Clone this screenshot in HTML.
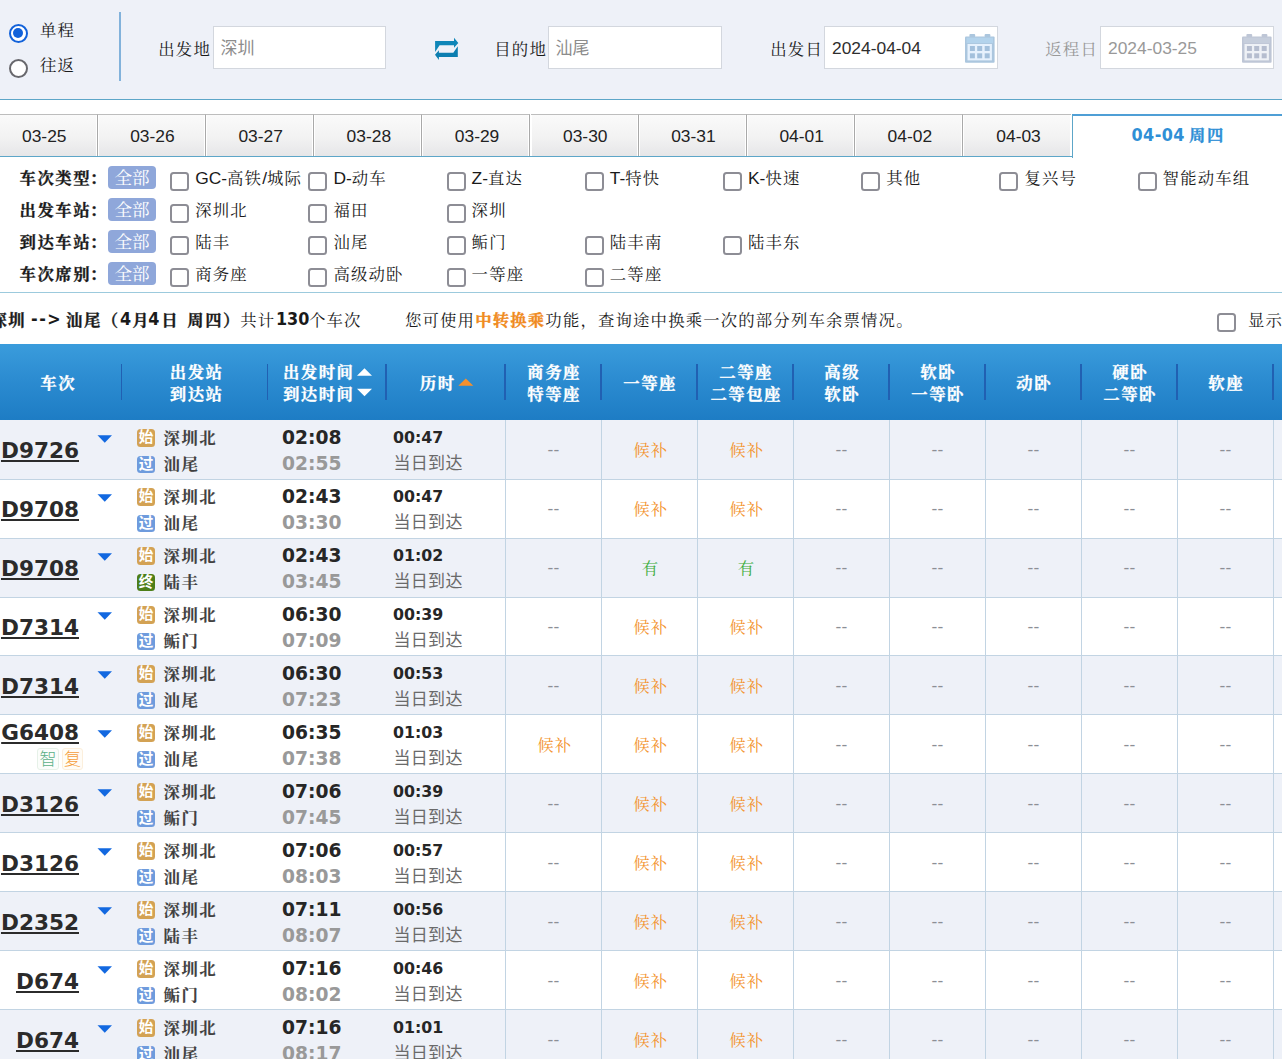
<!DOCTYPE html>
<html lang="zh-CN"><head><meta charset="utf-8"><title>车票预订</title>
<style>
html,body{margin:0;padding:0}
body{width:1282px;height:1059px;overflow:hidden;position:relative;background:#fff;font-size:16.4px;letter-spacing:1.15px;color:#1a1a1a;font-family:"Liberation Sans","Noto Serif CJK SC",serif}
.a{position:absolute;white-space:nowrap;box-sizing:border-box}
.l{font-size:17.4px;letter-spacing:0}
.sf{font-family:"Liberation Sans","Noto Serif CJK SC",serif}
.ss{font-family:"Liberation Sans","Noto Sans CJK SC",sans-serif}
.nm{font-family:"DejaVu Sans",sans-serif;font-weight:bold;letter-spacing:0}
.nc{font-family:"DejaVu Sans Condensed","DejaVu Sans",sans-serif;font-weight:bold;letter-spacing:0;font-size:17.8px;position:relative;top:-0.8px}
.cb{position:absolute;box-sizing:border-box;width:19px;height:19px;border:2px solid #8d8d95;border-radius:3.5px;background:#fff}
.all{position:absolute;box-sizing:border-box;width:48px;height:23px;border-radius:4px;background:#8fa7da;color:#fff;text-align:center;line-height:24.4px;font-size:17.6px;letter-spacing:0}
.inp{position:absolute;box-sizing:border-box;background:#fff;border:1px solid #d3d7de;height:43px;top:26px}
.bd{position:absolute;box-sizing:border-box;width:18.4px;height:17.6px;border-radius:3.5px;color:#fff;font-size:14.6px;line-height:17.5px;text-align:center;letter-spacing:0;font-weight:bold}
</style></head><body>

<div class="a" style="left:0;top:0;width:1282px;height:100px;background:#eef1f8;border-bottom:1px solid #5da6c8"></div>
<div class="a" style="left:8.5px;top:23.7px;width:19px;height:19px;border-radius:50%;border:2.8px solid #1262da;background:#fff"></div>
<div class="a" style="left:12.7px;top:27.9px;width:10.6px;height:10.6px;border-radius:50%;background:#1262da"></div>
<div class="a" style="left:8.5px;top:58.5px;width:19px;height:19px;border-radius:50%;border:2.7px solid #68686d;background:#fff"></div>
<div class="a sf " style="left:40px;top:18.00px;line-height:24px;">单程</div>
<div class="a sf " style="left:40px;top:53.00px;line-height:24px;">往返</div>
<div class="a" style="left:119px;top:12px;width:1.5px;height:69px;background:#82b2db"></div>
<div class="a sf " style="left:158.3px;top:36.60px;line-height:24px;">出发地</div>
<div class="inp" style="left:213px;width:173px"></div>
<div class="a ss " style="left:220.5px;top:37.00px;line-height:24px;font-size:17px;color:#8c8c8c;letter-spacing:0;">深圳</div>
<svg class="a" style="left:430px;top:34px" width="32" height="30" viewBox="430 34 32 30">
<path d="M435.1 41 H454 V37.7 L458.3 42.9 L454 47.8 V45.3 H439.6 L435.1 52 Z" fill="#0f86b8"/>
<path d="M457.8 57.1 H438.9 V59.9 L435 54.7 L438.9 50.3 V52.8 H453.3 L457.8 46.3 Z" fill="#0c7eb0"/>
</svg>
<div class="a sf " style="left:494.3px;top:36.60px;line-height:24px;">目的地</div>
<div class="inp" style="left:548px;width:174px"></div>
<div class="a ss " style="left:555.5px;top:37.00px;line-height:24px;font-size:17px;color:#8c8c8c;letter-spacing:0;">汕尾</div>
<div class="a sf " style="left:770.3px;top:36.60px;line-height:24px;">出发日</div>
<div class="inp" style="left:824px;width:174px"></div>
<div class="a sf " style="left:832px;top:36.40px;line-height:24px;color:#2e2e2e;"><span class="l">2024-04-04</span></div>
<div class="a sf " style="left:1045.3px;top:36.60px;line-height:24px;color:#999;">返程日</div>
<div class="inp" style="left:1100px;width:174px"></div>
<div class="a sf " style="left:1108px;top:36.40px;line-height:24px;color:#999;"><span class="l">2024-03-25</span></div>
<svg class="a" style="left:965.3px;top:34px" width="30" height="29" viewBox="0 0 30 29">
<rect x="4.4" y="0" width="5.8" height="3.2" rx="1" fill="#abc6de"/>
<rect x="19.6" y="0" width="5.8" height="3.2" rx="1" fill="#abc6de"/>
<rect x="0" y="2.6" width="29.6" height="26.2" rx="1" fill="#abc6de"/>
<rect x="1.5" y="3.6" width="26.6" height="5.6" fill="#b3d3ec"/>
<rect x="2.5" y="10" width="24.4" height="16.4" fill="#e6f1fd"/>
<rect x="4.9" y="12" width="5" height="5" fill="#a3c0dc"/><rect x="12.2" y="12" width="5" height="5" fill="#a3c0dc"/><rect x="19.7" y="12" width="5" height="5" fill="#a3c0dc"/>
<rect x="4.9" y="19.3" width="5" height="5" fill="#a3c0dc"/><rect x="12.2" y="19.3" width="5" height="5" fill="#a3c0dc"/><rect x="19.7" y="19.3" width="5" height="5" fill="#a3c0dc"/>
</svg>
<svg class="a" style="left:1242.3px;top:34px" width="30" height="29" viewBox="0 0 30 29">
<rect x="4.4" y="0" width="5.8" height="3.2" rx="1" fill="#bec6d6"/>
<rect x="19.6" y="0" width="5.8" height="3.2" rx="1" fill="#bec6d6"/>
<rect x="0" y="2.6" width="29.6" height="26.2" rx="1" fill="#bec6d6"/>
<rect x="1.5" y="3.6" width="26.6" height="5.6" fill="#c6cedc"/>
<rect x="2.5" y="10" width="24.4" height="16.4" fill="#eef1f6"/>
<rect x="4.9" y="12" width="5" height="5" fill="#b5bdcf"/><rect x="12.2" y="12" width="5" height="5" fill="#b5bdcf"/><rect x="19.7" y="12" width="5" height="5" fill="#b5bdcf"/>
<rect x="4.9" y="19.3" width="5" height="5" fill="#b5bdcf"/><rect x="12.2" y="19.3" width="5" height="5" fill="#b5bdcf"/><rect x="19.7" y="19.3" width="5" height="5" fill="#b5bdcf"/>
</svg>
<div class="a" style="left:0;top:155.5px;width:1282px;height:1.5px;background:#5da6c8"></div>
<div class="a l" style="left:-10.5px;top:114px;width:108.2px;height:42px;background:linear-gradient(#fafafa,#f2f2f2 55%,#e6e6e8);border-top:1px solid #bdbdbd;border-right:1px solid #a9a9a9;box-shadow:inset -1px 0 0 #fff, inset 1px 0 0 #fff;text-align:center;line-height:42px;padding-left:2.3px;color:#222">03-25</div>
<div class="a l" style="left:97.7px;top:114px;width:108.2px;height:42px;background:linear-gradient(#fafafa,#f2f2f2 55%,#e6e6e8);border-top:1px solid #bdbdbd;border-right:1px solid #a9a9a9;box-shadow:inset -1px 0 0 #fff, inset 1px 0 0 #fff;text-align:center;line-height:42px;padding-left:2.3px;color:#222">03-26</div>
<div class="a l" style="left:205.9px;top:114px;width:108.2px;height:42px;background:linear-gradient(#fafafa,#f2f2f2 55%,#e6e6e8);border-top:1px solid #bdbdbd;border-right:1px solid #a9a9a9;box-shadow:inset -1px 0 0 #fff, inset 1px 0 0 #fff;text-align:center;line-height:42px;padding-left:2.3px;color:#222">03-27</div>
<div class="a l" style="left:314.1px;top:114px;width:108.2px;height:42px;background:linear-gradient(#fafafa,#f2f2f2 55%,#e6e6e8);border-top:1px solid #bdbdbd;border-right:1px solid #a9a9a9;box-shadow:inset -1px 0 0 #fff, inset 1px 0 0 #fff;text-align:center;line-height:42px;padding-left:2.3px;color:#222">03-28</div>
<div class="a l" style="left:422.3px;top:114px;width:108.2px;height:42px;background:linear-gradient(#fafafa,#f2f2f2 55%,#e6e6e8);border-top:1px solid #bdbdbd;border-right:1px solid #a9a9a9;box-shadow:inset -1px 0 0 #fff, inset 1px 0 0 #fff;text-align:center;line-height:42px;padding-left:2.3px;color:#222">03-29</div>
<div class="a l" style="left:530.5px;top:114px;width:108.2px;height:42px;background:linear-gradient(#fafafa,#f2f2f2 55%,#e6e6e8);border-top:1px solid #bdbdbd;border-right:1px solid #a9a9a9;box-shadow:inset -1px 0 0 #fff, inset 1px 0 0 #fff;text-align:center;line-height:42px;padding-left:2.3px;color:#222">03-30</div>
<div class="a l" style="left:638.7px;top:114px;width:108.2px;height:42px;background:linear-gradient(#fafafa,#f2f2f2 55%,#e6e6e8);border-top:1px solid #bdbdbd;border-right:1px solid #a9a9a9;box-shadow:inset -1px 0 0 #fff, inset 1px 0 0 #fff;text-align:center;line-height:42px;padding-left:2.3px;color:#222">03-31</div>
<div class="a l" style="left:746.9px;top:114px;width:108.2px;height:42px;background:linear-gradient(#fafafa,#f2f2f2 55%,#e6e6e8);border-top:1px solid #bdbdbd;border-right:1px solid #a9a9a9;box-shadow:inset -1px 0 0 #fff, inset 1px 0 0 #fff;text-align:center;line-height:42px;padding-left:2.3px;color:#222">04-01</div>
<div class="a l" style="left:855.1px;top:114px;width:108.2px;height:42px;background:linear-gradient(#fafafa,#f2f2f2 55%,#e6e6e8);border-top:1px solid #bdbdbd;border-right:1px solid #a9a9a9;box-shadow:inset -1px 0 0 #fff, inset 1px 0 0 #fff;text-align:center;line-height:42px;padding-left:2.3px;color:#222">04-02</div>
<div class="a l" style="left:963.3px;top:114px;width:108.2px;height:42px;background:linear-gradient(#fafafa,#f2f2f2 55%,#e6e6e8);border-top:1px solid #bdbdbd;box-shadow:inset -1px 0 0 #fff, inset 1px 0 0 #fff;text-align:center;line-height:42px;padding-left:2.3px;color:#222">04-03</div>
<div class="a" style="left:1071.5px;top:114px;width:218.5px;height:43.5px;background:#fff;border-top:2px solid #4f9fd6;border-left:1.5px solid #5da6c8;text-align:left;line-height:39.5px;color:#2f8fd6;font-weight:bold"><span class="nc" style="margin-left:59px;letter-spacing:0.45px">04-04</span><span style="margin-left:4.2px;position:relative;top:-0.8px;letter-spacing:1.5px;-webkit-text-stroke:0.3px">周四</span></div>
<div class="a sf " style="left:19.5px;top:165.70px;line-height:24px;font-weight:bold;letter-spacing:1.5px;-webkit-text-stroke:0.3px;">车次类型<span style="margin-left:-1.4px">：</span></div>
<div class="all sf" style="left:108px;top:166.2px">全部</div>
<div class="cb" style="left:170.2px;top:172.0px"></div>
<div class="a sf " style="left:195.2px;top:165.70px;line-height:24px;"><span class="l">GC-</span>高铁<span class="l">/</span>城际</div>
<div class="cb" style="left:308.4px;top:172.0px"></div>
<div class="a sf " style="left:333.4px;top:165.70px;line-height:24px;"><span class="l">D-</span>动车</div>
<div class="cb" style="left:446.6px;top:172.0px"></div>
<div class="a sf " style="left:471.59999999999997px;top:165.70px;line-height:24px;"><span class="l">Z-</span>直达</div>
<div class="cb" style="left:584.8px;top:172.0px"></div>
<div class="a sf " style="left:609.8px;top:165.70px;line-height:24px;"><span class="l">T-</span>特快</div>
<div class="cb" style="left:723.0px;top:172.0px"></div>
<div class="a sf " style="left:748.0px;top:165.70px;line-height:24px;"><span class="l">K-</span>快速</div>
<div class="cb" style="left:861.2px;top:172.0px"></div>
<div class="a sf " style="left:886.2px;top:165.70px;line-height:24px;">其他</div>
<div class="cb" style="left:999.4px;top:172.0px"></div>
<div class="a sf " style="left:1024.3999999999999px;top:165.70px;line-height:24px;">复兴号</div>
<div class="cb" style="left:1137.6px;top:172.0px"></div>
<div class="a sf " style="left:1162.6px;top:165.70px;line-height:24px;">智能动车组</div>
<div class="a sf " style="left:19.5px;top:197.70px;line-height:24px;font-weight:bold;letter-spacing:1.5px;-webkit-text-stroke:0.3px;">出发车站<span style="margin-left:-1.4px">：</span></div>
<div class="all sf" style="left:108px;top:198.2px">全部</div>
<div class="cb" style="left:170.2px;top:204.0px"></div>
<div class="a sf " style="left:195.2px;top:197.70px;line-height:24px;">深圳北</div>
<div class="cb" style="left:308.4px;top:204.0px"></div>
<div class="a sf " style="left:333.4px;top:197.70px;line-height:24px;">福田</div>
<div class="cb" style="left:446.6px;top:204.0px"></div>
<div class="a sf " style="left:471.59999999999997px;top:197.70px;line-height:24px;">深圳</div>
<div class="a sf " style="left:19.5px;top:229.70px;line-height:24px;font-weight:bold;letter-spacing:1.5px;-webkit-text-stroke:0.3px;">到达车站<span style="margin-left:-1.4px">：</span></div>
<div class="all sf" style="left:108px;top:230.2px">全部</div>
<div class="cb" style="left:170.2px;top:236.0px"></div>
<div class="a sf " style="left:195.2px;top:229.70px;line-height:24px;">陆丰</div>
<div class="cb" style="left:308.4px;top:236.0px"></div>
<div class="a sf " style="left:333.4px;top:229.70px;line-height:24px;">汕尾</div>
<div class="cb" style="left:446.6px;top:236.0px"></div>
<div class="a sf " style="left:471.59999999999997px;top:229.70px;line-height:24px;">鲘门</div>
<div class="cb" style="left:584.8px;top:236.0px"></div>
<div class="a sf " style="left:609.8px;top:229.70px;line-height:24px;">陆丰南</div>
<div class="cb" style="left:723.0px;top:236.0px"></div>
<div class="a sf " style="left:748.0px;top:229.70px;line-height:24px;">陆丰东</div>
<div class="a sf " style="left:19.5px;top:261.70px;line-height:24px;font-weight:bold;letter-spacing:1.5px;-webkit-text-stroke:0.3px;">车次席别<span style="margin-left:-1.4px">：</span></div>
<div class="all sf" style="left:108px;top:262.2px">全部</div>
<div class="cb" style="left:170.2px;top:268.0px"></div>
<div class="a sf " style="left:195.2px;top:261.70px;line-height:24px;">商务座</div>
<div class="cb" style="left:308.4px;top:268.0px"></div>
<div class="a sf " style="left:333.4px;top:261.70px;line-height:24px;">高级动卧</div>
<div class="cb" style="left:446.6px;top:268.0px"></div>
<div class="a sf " style="left:471.59999999999997px;top:261.70px;line-height:24px;">一等座</div>
<div class="cb" style="left:584.8px;top:268.0px"></div>
<div class="a sf " style="left:609.8px;top:261.70px;line-height:24px;">二等座</div>
<div class="a" style="left:0;top:292px;width:1282px;height:1px;background:#9ccadd"></div>
<div class="a sf " style="left:-173.8px;top:308.00px;line-height:24px;font-weight:bold;letter-spacing:1.5px;-webkit-text-stroke:0.3px;width:200px;text-align:right;">深圳</div>
<div class="a sf " style="left:31px;top:308.00px;line-height:24px;"><span class="nc" style="letter-spacing:1.5px">--&gt;</span></div>
<div class="a sf " style="left:66px;top:308.00px;line-height:24px;font-weight:bold;letter-spacing:1.5px;-webkit-text-stroke:0.3px;">汕尾（</div>
<div class="a sf " style="left:105.5px;top:308.00px;line-height:24px;width:40px;text-align:center;"><span class="nc">4</span></div>
<div class="a sf " style="left:132.3px;top:308.00px;line-height:24px;font-weight:bold;letter-spacing:1.5px;-webkit-text-stroke:0.3px;">月</div>
<div class="a sf " style="left:133.9px;top:308.00px;line-height:24px;width:40px;text-align:center;"><span class="nc">4</span></div>
<div class="a sf " style="left:161.3px;top:308.00px;line-height:24px;font-weight:bold;letter-spacing:1.5px;-webkit-text-stroke:0.3px;">日</div>
<div class="a sf " style="left:187.3px;top:308.00px;line-height:24px;font-weight:bold;letter-spacing:1.5px;-webkit-text-stroke:0.3px;">周四）</div>
<div class="a sf " style="left:240.3px;top:308.00px;line-height:24px;">共计</div>
<div class="a sf " style="left:262.6px;top:308.00px;line-height:24px;width:60px;text-align:center;"><span class="nc">130</span></div>
<div class="a sf " style="left:309px;top:308.00px;line-height:24px;">个车次</div>
<div class="a sf " style="left:405px;top:308.00px;line-height:24px;">您可使用<b style="color:#f08a20;letter-spacing:1.15px;-webkit-text-stroke:0.3px">中转换乘</b>功能，查询途中换乘一次的部分列车余票情况。</div>
<div class="cb" style="left:1217px;top:313px"></div>
<div class="a sf " style="left:1248px;top:308.00px;line-height:24px;">显示全部可预订车次</div>
<div class="a" style="left:0;top:344px;width:1282px;height:76.5px;background:linear-gradient(#3a9cdc,#2c8cd1 45%,#1d7cc4)"></div>
<div class="a" style="left:120.95px;top:363.5px;width:1.5px;height:36.5px;background:#2160b2"></div>
<div class="a" style="left:266.75px;top:363.5px;width:1.5px;height:36.5px;background:#2160b2"></div>
<div class="a" style="left:385.25px;top:363.5px;width:1.5px;height:36.5px;background:#2160b2"></div>
<div class="a" style="left:504.25px;top:363.5px;width:1.5px;height:36.5px;background:#2160b2"></div>
<div class="a" style="left:600.25px;top:363.5px;width:1.5px;height:36.5px;background:#2160b2"></div>
<div class="a" style="left:696.25px;top:363.5px;width:1.5px;height:36.5px;background:#2160b2"></div>
<div class="a" style="left:792.25px;top:363.5px;width:1.5px;height:36.5px;background:#2160b2"></div>
<div class="a" style="left:888.25px;top:363.5px;width:1.5px;height:36.5px;background:#2160b2"></div>
<div class="a" style="left:984.25px;top:363.5px;width:1.5px;height:36.5px;background:#2160b2"></div>
<div class="a" style="left:1080.25px;top:363.5px;width:1.5px;height:36.5px;background:#2160b2"></div>
<div class="a" style="left:1176.25px;top:363.5px;width:1.5px;height:36.5px;background:#2160b2"></div>
<div class="a" style="left:1272.25px;top:363.5px;width:1.5px;height:36.5px;background:#2160b2"></div>
<div class="a sf " style="left:-41.8px;top:371.00px;line-height:24px;color:#fff;font-weight:bold;letter-spacing:1.5px;-webkit-text-stroke:0.3px;width:200px;text-align:center;">车次</div>
<div class="a sf " style="left:96.69999999999999px;top:360.30px;line-height:24px;color:#fff;font-weight:bold;letter-spacing:1.5px;-webkit-text-stroke:0.3px;width:200px;text-align:center;">出发站</div>
<div class="a sf " style="left:96.69999999999999px;top:381.80px;line-height:24px;color:#fff;font-weight:bold;letter-spacing:1.5px;-webkit-text-stroke:0.3px;width:200px;text-align:center;">到达站</div>
<div class="a sf " style="left:218.7px;top:360.30px;line-height:24px;color:#fff;font-weight:bold;letter-spacing:1.5px;-webkit-text-stroke:0.3px;width:200px;text-align:center;">出发时间</div>
<div class="a sf " style="left:218.7px;top:381.80px;line-height:24px;color:#fff;font-weight:bold;letter-spacing:1.5px;-webkit-text-stroke:0.3px;width:200px;text-align:center;">到达时间</div>
<div class="a sf " style="left:337.7px;top:371.00px;line-height:24px;color:#fff;font-weight:bold;letter-spacing:1.5px;-webkit-text-stroke:0.3px;width:200px;text-align:center;">历时</div>
<div class="a sf " style="left:454.20000000000005px;top:360.30px;line-height:24px;color:#fff;font-weight:bold;letter-spacing:1.5px;-webkit-text-stroke:0.3px;width:200px;text-align:center;">商务座</div>
<div class="a sf " style="left:454.20000000000005px;top:381.80px;line-height:24px;color:#fff;font-weight:bold;letter-spacing:1.5px;-webkit-text-stroke:0.3px;width:200px;text-align:center;">特等座</div>
<div class="a sf " style="left:550.2px;top:371.00px;line-height:24px;color:#fff;font-weight:bold;letter-spacing:1.5px;-webkit-text-stroke:0.3px;width:200px;text-align:center;">一等座</div>
<div class="a sf " style="left:646.2px;top:360.30px;line-height:24px;color:#fff;font-weight:bold;letter-spacing:1.5px;-webkit-text-stroke:0.3px;width:200px;text-align:center;">二等座</div>
<div class="a sf " style="left:646.2px;top:381.80px;line-height:24px;color:#fff;font-weight:bold;letter-spacing:1.5px;-webkit-text-stroke:0.3px;width:200px;text-align:center;">二等包座</div>
<div class="a sf " style="left:742.2px;top:360.30px;line-height:24px;color:#fff;font-weight:bold;letter-spacing:1.5px;-webkit-text-stroke:0.3px;width:200px;text-align:center;">高级</div>
<div class="a sf " style="left:742.2px;top:381.80px;line-height:24px;color:#fff;font-weight:bold;letter-spacing:1.5px;-webkit-text-stroke:0.3px;width:200px;text-align:center;">软卧</div>
<div class="a sf " style="left:838.2px;top:360.30px;line-height:24px;color:#fff;font-weight:bold;letter-spacing:1.5px;-webkit-text-stroke:0.3px;width:200px;text-align:center;">软卧</div>
<div class="a sf " style="left:838.2px;top:381.80px;line-height:24px;color:#fff;font-weight:bold;letter-spacing:1.5px;-webkit-text-stroke:0.3px;width:200px;text-align:center;">一等卧</div>
<div class="a sf " style="left:934.2px;top:371.00px;line-height:24px;color:#fff;font-weight:bold;letter-spacing:1.5px;-webkit-text-stroke:0.3px;width:200px;text-align:center;">动卧</div>
<div class="a sf " style="left:1030.2px;top:360.30px;line-height:24px;color:#fff;font-weight:bold;letter-spacing:1.5px;-webkit-text-stroke:0.3px;width:200px;text-align:center;">硬卧</div>
<div class="a sf " style="left:1030.2px;top:381.80px;line-height:24px;color:#fff;font-weight:bold;letter-spacing:1.5px;-webkit-text-stroke:0.3px;width:200px;text-align:center;">二等卧</div>
<div class="a sf " style="left:1126.2px;top:371.00px;line-height:24px;color:#fff;font-weight:bold;letter-spacing:1.5px;-webkit-text-stroke:0.3px;width:200px;text-align:center;">软座</div>
<svg class="a" style="left:356.2px;top:366px" width="18" height="34" viewBox="0 0 18 34"><path d="M1 9.7 L8.5 2.2 L16 9.7 Z" fill="#fff"/><path d="M1 22.8 L16 22.8 L8.5 30.3 Z" fill="#fff"/></svg>
<svg class="a" style="left:458px;top:377px" width="16" height="10" viewBox="0 0 16 10"><path d="M0.3 8.7 L7.8 1.4 L15.3 8.7 Z" fill="#f4902e"/></svg>
<div class="a" style="left:0;top:420px;width:1282px;height:60px;background:#eef1f8;border-bottom:1px solid #c2d4e3"></div>
<div class="a" style="left:505px;top:420px;width:1px;height:60px;background:#c2d4e3"></div>
<div class="a" style="left:601px;top:420px;width:1px;height:60px;background:#c2d4e3"></div>
<div class="a" style="left:697px;top:420px;width:1px;height:60px;background:#c2d4e3"></div>
<div class="a" style="left:793px;top:420px;width:1px;height:60px;background:#c2d4e3"></div>
<div class="a" style="left:889px;top:420px;width:1px;height:60px;background:#c2d4e3"></div>
<div class="a" style="left:985px;top:420px;width:1px;height:60px;background:#c2d4e3"></div>
<div class="a" style="left:1081px;top:420px;width:1px;height:60px;background:#c2d4e3"></div>
<div class="a" style="left:1177px;top:420px;width:1px;height:60px;background:#c2d4e3"></div>
<div class="a" style="left:1273px;top:420px;width:1px;height:60px;background:#c2d4e3"></div>
<div class="a nm" style="left:-121px;width:200px;text-align:right;top:436.3px;line-height:30px;font-size:21.6px;color:#2b2b2b;text-decoration:underline;text-decoration-thickness:2px;text-underline-offset:2px">D9726</div>
<svg class="a" style="left:97px;top:435.0px" width="16" height="9" viewBox="0 0 16 9"><path d="M0.5 0.3 H15 L7.75 7.8 Z" fill="#1268e0"/></svg>
<div class="bd ss" style="left:136.9px;top:429.3px;background:#d3a254">始</div>
<div class="bd ss" style="left:136.9px;top:455.8px;background:#6e9bdd">过</div>
<div class="a sf " style="left:163.6px;top:425.50px;line-height:24px;color:#404040;font-weight:bold;letter-spacing:1.5px;-webkit-text-stroke:0.3px;-webkit-text-stroke:0.12px;">深圳北</div>
<div class="a sf " style="left:163.6px;top:451.50px;line-height:24px;color:#404040;font-weight:bold;letter-spacing:1.5px;-webkit-text-stroke:0.3px;-webkit-text-stroke:0.12px;">汕尾</div>
<div class="a nm " style="left:282px;top:425.50px;line-height:24px;font-size:18.7px;color:#262626;">02:08</div>
<div class="a nm " style="left:282px;top:451.80px;line-height:24px;font-size:18.7px;color:#999;">02:55</div>
<div class="a nm " style="left:393px;top:425.80px;line-height:24px;font-size:15.84px;color:#262626;">00:47</div>
<div class="a ss " style="left:393.5px;top:452.00px;line-height:24px;font-size:17px;color:#6a6a6a;letter-spacing:0.3px;">当日到达</div>
<div class="a sf " style="left:508.5px;top:437.00px;line-height:24px;font-size:17.4px;color:#8c8f96;letter-spacing:0.3px;width:90px;text-align:center;">--</div>
<div class="a sf " style="left:605.7px;top:437.60px;line-height:24px;color:#f3942f;width:90px;text-align:center;">候补</div>
<div class="a sf " style="left:701.7px;top:437.60px;line-height:24px;color:#f3942f;width:90px;text-align:center;">候补</div>
<div class="a sf " style="left:796.5px;top:437.00px;line-height:24px;font-size:17.4px;color:#8c8f96;letter-spacing:0.3px;width:90px;text-align:center;">--</div>
<div class="a sf " style="left:892.5px;top:437.00px;line-height:24px;font-size:17.4px;color:#8c8f96;letter-spacing:0.3px;width:90px;text-align:center;">--</div>
<div class="a sf " style="left:988.5px;top:437.00px;line-height:24px;font-size:17.4px;color:#8c8f96;letter-spacing:0.3px;width:90px;text-align:center;">--</div>
<div class="a sf " style="left:1084.5px;top:437.00px;line-height:24px;font-size:17.4px;color:#8c8f96;letter-spacing:0.3px;width:90px;text-align:center;">--</div>
<div class="a sf " style="left:1180.5px;top:437.00px;line-height:24px;font-size:17.4px;color:#8c8f96;letter-spacing:0.3px;width:90px;text-align:center;">--</div>
<div class="a" style="left:0;top:480px;width:1282px;height:59px;background:#fff;border-bottom:1px solid #c2d4e3"></div>
<div class="a" style="left:505px;top:480px;width:1px;height:59px;background:#c2d4e3"></div>
<div class="a" style="left:601px;top:480px;width:1px;height:59px;background:#c2d4e3"></div>
<div class="a" style="left:697px;top:480px;width:1px;height:59px;background:#c2d4e3"></div>
<div class="a" style="left:793px;top:480px;width:1px;height:59px;background:#c2d4e3"></div>
<div class="a" style="left:889px;top:480px;width:1px;height:59px;background:#c2d4e3"></div>
<div class="a" style="left:985px;top:480px;width:1px;height:59px;background:#c2d4e3"></div>
<div class="a" style="left:1081px;top:480px;width:1px;height:59px;background:#c2d4e3"></div>
<div class="a" style="left:1177px;top:480px;width:1px;height:59px;background:#c2d4e3"></div>
<div class="a" style="left:1273px;top:480px;width:1px;height:59px;background:#c2d4e3"></div>
<div class="a nm" style="left:-121px;width:200px;text-align:right;top:495.3px;line-height:30px;font-size:21.6px;color:#2b2b2b;text-decoration:underline;text-decoration-thickness:2px;text-underline-offset:2px">D9708</div>
<svg class="a" style="left:97px;top:494.0px" width="16" height="9" viewBox="0 0 16 9"><path d="M0.5 0.3 H15 L7.75 7.8 Z" fill="#1268e0"/></svg>
<div class="bd ss" style="left:136.9px;top:488.3px;background:#d3a254">始</div>
<div class="bd ss" style="left:136.9px;top:514.8px;background:#6e9bdd">过</div>
<div class="a sf " style="left:163.6px;top:484.50px;line-height:24px;color:#404040;font-weight:bold;letter-spacing:1.5px;-webkit-text-stroke:0.3px;-webkit-text-stroke:0.12px;">深圳北</div>
<div class="a sf " style="left:163.6px;top:510.50px;line-height:24px;color:#404040;font-weight:bold;letter-spacing:1.5px;-webkit-text-stroke:0.3px;-webkit-text-stroke:0.12px;">汕尾</div>
<div class="a nm " style="left:282px;top:484.50px;line-height:24px;font-size:18.7px;color:#262626;">02:43</div>
<div class="a nm " style="left:282px;top:510.80px;line-height:24px;font-size:18.7px;color:#999;">03:30</div>
<div class="a nm " style="left:393px;top:484.80px;line-height:24px;font-size:15.84px;color:#262626;">00:47</div>
<div class="a ss " style="left:393.5px;top:511.00px;line-height:24px;font-size:17px;color:#6a6a6a;letter-spacing:0.3px;">当日到达</div>
<div class="a sf " style="left:508.5px;top:496.00px;line-height:24px;font-size:17.4px;color:#8c8f96;letter-spacing:0.3px;width:90px;text-align:center;">--</div>
<div class="a sf " style="left:605.7px;top:496.60px;line-height:24px;color:#f3942f;width:90px;text-align:center;">候补</div>
<div class="a sf " style="left:701.7px;top:496.60px;line-height:24px;color:#f3942f;width:90px;text-align:center;">候补</div>
<div class="a sf " style="left:796.5px;top:496.00px;line-height:24px;font-size:17.4px;color:#8c8f96;letter-spacing:0.3px;width:90px;text-align:center;">--</div>
<div class="a sf " style="left:892.5px;top:496.00px;line-height:24px;font-size:17.4px;color:#8c8f96;letter-spacing:0.3px;width:90px;text-align:center;">--</div>
<div class="a sf " style="left:988.5px;top:496.00px;line-height:24px;font-size:17.4px;color:#8c8f96;letter-spacing:0.3px;width:90px;text-align:center;">--</div>
<div class="a sf " style="left:1084.5px;top:496.00px;line-height:24px;font-size:17.4px;color:#8c8f96;letter-spacing:0.3px;width:90px;text-align:center;">--</div>
<div class="a sf " style="left:1180.5px;top:496.00px;line-height:24px;font-size:17.4px;color:#8c8f96;letter-spacing:0.3px;width:90px;text-align:center;">--</div>
<div class="a" style="left:0;top:539px;width:1282px;height:59px;background:#eef1f8;border-bottom:1px solid #c2d4e3"></div>
<div class="a" style="left:505px;top:539px;width:1px;height:59px;background:#c2d4e3"></div>
<div class="a" style="left:601px;top:539px;width:1px;height:59px;background:#c2d4e3"></div>
<div class="a" style="left:697px;top:539px;width:1px;height:59px;background:#c2d4e3"></div>
<div class="a" style="left:793px;top:539px;width:1px;height:59px;background:#c2d4e3"></div>
<div class="a" style="left:889px;top:539px;width:1px;height:59px;background:#c2d4e3"></div>
<div class="a" style="left:985px;top:539px;width:1px;height:59px;background:#c2d4e3"></div>
<div class="a" style="left:1081px;top:539px;width:1px;height:59px;background:#c2d4e3"></div>
<div class="a" style="left:1177px;top:539px;width:1px;height:59px;background:#c2d4e3"></div>
<div class="a" style="left:1273px;top:539px;width:1px;height:59px;background:#c2d4e3"></div>
<div class="a nm" style="left:-121px;width:200px;text-align:right;top:554.3px;line-height:30px;font-size:21.6px;color:#2b2b2b;text-decoration:underline;text-decoration-thickness:2px;text-underline-offset:2px">D9708</div>
<svg class="a" style="left:97px;top:553.0px" width="16" height="9" viewBox="0 0 16 9"><path d="M0.5 0.3 H15 L7.75 7.8 Z" fill="#1268e0"/></svg>
<div class="bd ss" style="left:136.9px;top:547.3px;background:#d3a254">始</div>
<div class="bd ss" style="left:136.9px;top:573.8px;background:#4d7e18">终</div>
<div class="a sf " style="left:163.6px;top:543.50px;line-height:24px;color:#404040;font-weight:bold;letter-spacing:1.5px;-webkit-text-stroke:0.3px;-webkit-text-stroke:0.12px;">深圳北</div>
<div class="a sf " style="left:163.6px;top:569.50px;line-height:24px;color:#404040;font-weight:bold;letter-spacing:1.5px;-webkit-text-stroke:0.3px;-webkit-text-stroke:0.12px;">陆丰</div>
<div class="a nm " style="left:282px;top:543.50px;line-height:24px;font-size:18.7px;color:#262626;">02:43</div>
<div class="a nm " style="left:282px;top:569.80px;line-height:24px;font-size:18.7px;color:#999;">03:45</div>
<div class="a nm " style="left:393px;top:543.80px;line-height:24px;font-size:15.84px;color:#262626;">01:02</div>
<div class="a ss " style="left:393.5px;top:570.00px;line-height:24px;font-size:17px;color:#6a6a6a;letter-spacing:0.3px;">当日到达</div>
<div class="a sf " style="left:508.5px;top:555.00px;line-height:24px;font-size:17.4px;color:#8c8f96;letter-spacing:0.3px;width:90px;text-align:center;">--</div>
<div class="a sf " style="left:605.5px;top:555.60px;line-height:24px;color:#3fae3f;width:90px;text-align:center;">有</div>
<div class="a sf " style="left:701.5px;top:555.60px;line-height:24px;color:#3fae3f;width:90px;text-align:center;">有</div>
<div class="a sf " style="left:796.5px;top:555.00px;line-height:24px;font-size:17.4px;color:#8c8f96;letter-spacing:0.3px;width:90px;text-align:center;">--</div>
<div class="a sf " style="left:892.5px;top:555.00px;line-height:24px;font-size:17.4px;color:#8c8f96;letter-spacing:0.3px;width:90px;text-align:center;">--</div>
<div class="a sf " style="left:988.5px;top:555.00px;line-height:24px;font-size:17.4px;color:#8c8f96;letter-spacing:0.3px;width:90px;text-align:center;">--</div>
<div class="a sf " style="left:1084.5px;top:555.00px;line-height:24px;font-size:17.4px;color:#8c8f96;letter-spacing:0.3px;width:90px;text-align:center;">--</div>
<div class="a sf " style="left:1180.5px;top:555.00px;line-height:24px;font-size:17.4px;color:#8c8f96;letter-spacing:0.3px;width:90px;text-align:center;">--</div>
<div class="a" style="left:0;top:598px;width:1282px;height:58px;background:#fff;border-bottom:1px solid #c2d4e3"></div>
<div class="a" style="left:505px;top:598px;width:1px;height:58px;background:#c2d4e3"></div>
<div class="a" style="left:601px;top:598px;width:1px;height:58px;background:#c2d4e3"></div>
<div class="a" style="left:697px;top:598px;width:1px;height:58px;background:#c2d4e3"></div>
<div class="a" style="left:793px;top:598px;width:1px;height:58px;background:#c2d4e3"></div>
<div class="a" style="left:889px;top:598px;width:1px;height:58px;background:#c2d4e3"></div>
<div class="a" style="left:985px;top:598px;width:1px;height:58px;background:#c2d4e3"></div>
<div class="a" style="left:1081px;top:598px;width:1px;height:58px;background:#c2d4e3"></div>
<div class="a" style="left:1177px;top:598px;width:1px;height:58px;background:#c2d4e3"></div>
<div class="a" style="left:1273px;top:598px;width:1px;height:58px;background:#c2d4e3"></div>
<div class="a nm" style="left:-121px;width:200px;text-align:right;top:613.3px;line-height:30px;font-size:21.6px;color:#2b2b2b;text-decoration:underline;text-decoration-thickness:2px;text-underline-offset:2px">D7314</div>
<svg class="a" style="left:97px;top:612.0px" width="16" height="9" viewBox="0 0 16 9"><path d="M0.5 0.3 H15 L7.75 7.8 Z" fill="#1268e0"/></svg>
<div class="bd ss" style="left:136.9px;top:606.3px;background:#d3a254">始</div>
<div class="bd ss" style="left:136.9px;top:632.8px;background:#6e9bdd">过</div>
<div class="a sf " style="left:163.6px;top:602.50px;line-height:24px;color:#404040;font-weight:bold;letter-spacing:1.5px;-webkit-text-stroke:0.3px;-webkit-text-stroke:0.12px;">深圳北</div>
<div class="a sf " style="left:163.6px;top:628.50px;line-height:24px;color:#404040;font-weight:bold;letter-spacing:1.5px;-webkit-text-stroke:0.3px;-webkit-text-stroke:0.12px;">鲘门</div>
<div class="a nm " style="left:282px;top:602.50px;line-height:24px;font-size:18.7px;color:#262626;">06:30</div>
<div class="a nm " style="left:282px;top:628.80px;line-height:24px;font-size:18.7px;color:#999;">07:09</div>
<div class="a nm " style="left:393px;top:602.80px;line-height:24px;font-size:15.84px;color:#262626;">00:39</div>
<div class="a ss " style="left:393.5px;top:629.00px;line-height:24px;font-size:17px;color:#6a6a6a;letter-spacing:0.3px;">当日到达</div>
<div class="a sf " style="left:508.5px;top:614.00px;line-height:24px;font-size:17.4px;color:#8c8f96;letter-spacing:0.3px;width:90px;text-align:center;">--</div>
<div class="a sf " style="left:605.7px;top:614.60px;line-height:24px;color:#f3942f;width:90px;text-align:center;">候补</div>
<div class="a sf " style="left:701.7px;top:614.60px;line-height:24px;color:#f3942f;width:90px;text-align:center;">候补</div>
<div class="a sf " style="left:796.5px;top:614.00px;line-height:24px;font-size:17.4px;color:#8c8f96;letter-spacing:0.3px;width:90px;text-align:center;">--</div>
<div class="a sf " style="left:892.5px;top:614.00px;line-height:24px;font-size:17.4px;color:#8c8f96;letter-spacing:0.3px;width:90px;text-align:center;">--</div>
<div class="a sf " style="left:988.5px;top:614.00px;line-height:24px;font-size:17.4px;color:#8c8f96;letter-spacing:0.3px;width:90px;text-align:center;">--</div>
<div class="a sf " style="left:1084.5px;top:614.00px;line-height:24px;font-size:17.4px;color:#8c8f96;letter-spacing:0.3px;width:90px;text-align:center;">--</div>
<div class="a sf " style="left:1180.5px;top:614.00px;line-height:24px;font-size:17.4px;color:#8c8f96;letter-spacing:0.3px;width:90px;text-align:center;">--</div>
<div class="a" style="left:0;top:656px;width:1282px;height:59px;background:#eef1f8;border-bottom:1px solid #c2d4e3"></div>
<div class="a" style="left:505px;top:656px;width:1px;height:59px;background:#c2d4e3"></div>
<div class="a" style="left:601px;top:656px;width:1px;height:59px;background:#c2d4e3"></div>
<div class="a" style="left:697px;top:656px;width:1px;height:59px;background:#c2d4e3"></div>
<div class="a" style="left:793px;top:656px;width:1px;height:59px;background:#c2d4e3"></div>
<div class="a" style="left:889px;top:656px;width:1px;height:59px;background:#c2d4e3"></div>
<div class="a" style="left:985px;top:656px;width:1px;height:59px;background:#c2d4e3"></div>
<div class="a" style="left:1081px;top:656px;width:1px;height:59px;background:#c2d4e3"></div>
<div class="a" style="left:1177px;top:656px;width:1px;height:59px;background:#c2d4e3"></div>
<div class="a" style="left:1273px;top:656px;width:1px;height:59px;background:#c2d4e3"></div>
<div class="a nm" style="left:-121px;width:200px;text-align:right;top:672.3px;line-height:30px;font-size:21.6px;color:#2b2b2b;text-decoration:underline;text-decoration-thickness:2px;text-underline-offset:2px">D7314</div>
<svg class="a" style="left:97px;top:671.0px" width="16" height="9" viewBox="0 0 16 9"><path d="M0.5 0.3 H15 L7.75 7.8 Z" fill="#1268e0"/></svg>
<div class="bd ss" style="left:136.9px;top:665.3px;background:#d3a254">始</div>
<div class="bd ss" style="left:136.9px;top:691.8px;background:#6e9bdd">过</div>
<div class="a sf " style="left:163.6px;top:661.50px;line-height:24px;color:#404040;font-weight:bold;letter-spacing:1.5px;-webkit-text-stroke:0.3px;-webkit-text-stroke:0.12px;">深圳北</div>
<div class="a sf " style="left:163.6px;top:687.50px;line-height:24px;color:#404040;font-weight:bold;letter-spacing:1.5px;-webkit-text-stroke:0.3px;-webkit-text-stroke:0.12px;">汕尾</div>
<div class="a nm " style="left:282px;top:661.50px;line-height:24px;font-size:18.7px;color:#262626;">06:30</div>
<div class="a nm " style="left:282px;top:687.80px;line-height:24px;font-size:18.7px;color:#999;">07:23</div>
<div class="a nm " style="left:393px;top:661.80px;line-height:24px;font-size:15.84px;color:#262626;">00:53</div>
<div class="a ss " style="left:393.5px;top:688.00px;line-height:24px;font-size:17px;color:#6a6a6a;letter-spacing:0.3px;">当日到达</div>
<div class="a sf " style="left:508.5px;top:673.00px;line-height:24px;font-size:17.4px;color:#8c8f96;letter-spacing:0.3px;width:90px;text-align:center;">--</div>
<div class="a sf " style="left:605.7px;top:673.60px;line-height:24px;color:#f3942f;width:90px;text-align:center;">候补</div>
<div class="a sf " style="left:701.7px;top:673.60px;line-height:24px;color:#f3942f;width:90px;text-align:center;">候补</div>
<div class="a sf " style="left:796.5px;top:673.00px;line-height:24px;font-size:17.4px;color:#8c8f96;letter-spacing:0.3px;width:90px;text-align:center;">--</div>
<div class="a sf " style="left:892.5px;top:673.00px;line-height:24px;font-size:17.4px;color:#8c8f96;letter-spacing:0.3px;width:90px;text-align:center;">--</div>
<div class="a sf " style="left:988.5px;top:673.00px;line-height:24px;font-size:17.4px;color:#8c8f96;letter-spacing:0.3px;width:90px;text-align:center;">--</div>
<div class="a sf " style="left:1084.5px;top:673.00px;line-height:24px;font-size:17.4px;color:#8c8f96;letter-spacing:0.3px;width:90px;text-align:center;">--</div>
<div class="a sf " style="left:1180.5px;top:673.00px;line-height:24px;font-size:17.4px;color:#8c8f96;letter-spacing:0.3px;width:90px;text-align:center;">--</div>
<div class="a" style="left:0;top:715px;width:1282px;height:59px;background:#fff;border-bottom:1px solid #c2d4e3"></div>
<div class="a" style="left:505px;top:715px;width:1px;height:59px;background:#c2d4e3"></div>
<div class="a" style="left:601px;top:715px;width:1px;height:59px;background:#c2d4e3"></div>
<div class="a" style="left:697px;top:715px;width:1px;height:59px;background:#c2d4e3"></div>
<div class="a" style="left:793px;top:715px;width:1px;height:59px;background:#c2d4e3"></div>
<div class="a" style="left:889px;top:715px;width:1px;height:59px;background:#c2d4e3"></div>
<div class="a" style="left:985px;top:715px;width:1px;height:59px;background:#c2d4e3"></div>
<div class="a" style="left:1081px;top:715px;width:1px;height:59px;background:#c2d4e3"></div>
<div class="a" style="left:1177px;top:715px;width:1px;height:59px;background:#c2d4e3"></div>
<div class="a" style="left:1273px;top:715px;width:1px;height:59px;background:#c2d4e3"></div>
<div class="a nm" style="left:-121px;width:200px;text-align:right;top:717.9px;line-height:30px;font-size:21.6px;color:#2b2b2b;text-decoration:underline;text-decoration-thickness:2px;text-underline-offset:2px">G6408</div>
<div class="a ss" style="left:37.3px;top:747.7px;width:21.3px;height:22.4px;border:1px solid #e6f1e8;border-radius:3px;background:#fbfdfb;color:#5bb088;letter-spacing:0;font-size:17px;font-weight:300;line-height:22.6px;text-align:center">智</div>
<div class="a ss" style="left:61.8px;top:747.7px;width:21.3px;height:22.4px;border:1px solid #fcefdc;border-radius:3px;background:#fffcf6;color:#f59e3a;letter-spacing:0;font-size:17px;font-weight:300;line-height:22.6px;text-align:center">复</div>
<svg class="a" style="left:97px;top:730.0px" width="16" height="9" viewBox="0 0 16 9"><path d="M0.5 0.3 H15 L7.75 7.8 Z" fill="#1268e0"/></svg>
<div class="bd ss" style="left:136.9px;top:724.3px;background:#d3a254">始</div>
<div class="bd ss" style="left:136.9px;top:750.8px;background:#6e9bdd">过</div>
<div class="a sf " style="left:163.6px;top:720.50px;line-height:24px;color:#404040;font-weight:bold;letter-spacing:1.5px;-webkit-text-stroke:0.3px;-webkit-text-stroke:0.12px;">深圳北</div>
<div class="a sf " style="left:163.6px;top:746.50px;line-height:24px;color:#404040;font-weight:bold;letter-spacing:1.5px;-webkit-text-stroke:0.3px;-webkit-text-stroke:0.12px;">汕尾</div>
<div class="a nm " style="left:282px;top:720.50px;line-height:24px;font-size:18.7px;color:#262626;">06:35</div>
<div class="a nm " style="left:282px;top:746.80px;line-height:24px;font-size:18.7px;color:#999;">07:38</div>
<div class="a nm " style="left:393px;top:720.80px;line-height:24px;font-size:15.84px;color:#262626;">01:03</div>
<div class="a ss " style="left:393.5px;top:747.00px;line-height:24px;font-size:17px;color:#6a6a6a;letter-spacing:0.3px;">当日到达</div>
<div class="a sf " style="left:509.70000000000005px;top:732.60px;line-height:24px;color:#f3942f;width:90px;text-align:center;">候补</div>
<div class="a sf " style="left:605.7px;top:732.60px;line-height:24px;color:#f3942f;width:90px;text-align:center;">候补</div>
<div class="a sf " style="left:701.7px;top:732.60px;line-height:24px;color:#f3942f;width:90px;text-align:center;">候补</div>
<div class="a sf " style="left:796.5px;top:732.00px;line-height:24px;font-size:17.4px;color:#8c8f96;letter-spacing:0.3px;width:90px;text-align:center;">--</div>
<div class="a sf " style="left:892.5px;top:732.00px;line-height:24px;font-size:17.4px;color:#8c8f96;letter-spacing:0.3px;width:90px;text-align:center;">--</div>
<div class="a sf " style="left:988.5px;top:732.00px;line-height:24px;font-size:17.4px;color:#8c8f96;letter-spacing:0.3px;width:90px;text-align:center;">--</div>
<div class="a sf " style="left:1084.5px;top:732.00px;line-height:24px;font-size:17.4px;color:#8c8f96;letter-spacing:0.3px;width:90px;text-align:center;">--</div>
<div class="a sf " style="left:1180.5px;top:732.00px;line-height:24px;font-size:17.4px;color:#8c8f96;letter-spacing:0.3px;width:90px;text-align:center;">--</div>
<div class="a" style="left:0;top:774px;width:1282px;height:59px;background:#eef1f8;border-bottom:1px solid #c2d4e3"></div>
<div class="a" style="left:505px;top:774px;width:1px;height:59px;background:#c2d4e3"></div>
<div class="a" style="left:601px;top:774px;width:1px;height:59px;background:#c2d4e3"></div>
<div class="a" style="left:697px;top:774px;width:1px;height:59px;background:#c2d4e3"></div>
<div class="a" style="left:793px;top:774px;width:1px;height:59px;background:#c2d4e3"></div>
<div class="a" style="left:889px;top:774px;width:1px;height:59px;background:#c2d4e3"></div>
<div class="a" style="left:985px;top:774px;width:1px;height:59px;background:#c2d4e3"></div>
<div class="a" style="left:1081px;top:774px;width:1px;height:59px;background:#c2d4e3"></div>
<div class="a" style="left:1177px;top:774px;width:1px;height:59px;background:#c2d4e3"></div>
<div class="a" style="left:1273px;top:774px;width:1px;height:59px;background:#c2d4e3"></div>
<div class="a nm" style="left:-121px;width:200px;text-align:right;top:790.3px;line-height:30px;font-size:21.6px;color:#2b2b2b;text-decoration:underline;text-decoration-thickness:2px;text-underline-offset:2px">D3126</div>
<svg class="a" style="left:97px;top:789.0px" width="16" height="9" viewBox="0 0 16 9"><path d="M0.5 0.3 H15 L7.75 7.8 Z" fill="#1268e0"/></svg>
<div class="bd ss" style="left:136.9px;top:783.3px;background:#d3a254">始</div>
<div class="bd ss" style="left:136.9px;top:809.8px;background:#6e9bdd">过</div>
<div class="a sf " style="left:163.6px;top:779.50px;line-height:24px;color:#404040;font-weight:bold;letter-spacing:1.5px;-webkit-text-stroke:0.3px;-webkit-text-stroke:0.12px;">深圳北</div>
<div class="a sf " style="left:163.6px;top:805.50px;line-height:24px;color:#404040;font-weight:bold;letter-spacing:1.5px;-webkit-text-stroke:0.3px;-webkit-text-stroke:0.12px;">鲘门</div>
<div class="a nm " style="left:282px;top:779.50px;line-height:24px;font-size:18.7px;color:#262626;">07:06</div>
<div class="a nm " style="left:282px;top:805.80px;line-height:24px;font-size:18.7px;color:#999;">07:45</div>
<div class="a nm " style="left:393px;top:779.80px;line-height:24px;font-size:15.84px;color:#262626;">00:39</div>
<div class="a ss " style="left:393.5px;top:806.00px;line-height:24px;font-size:17px;color:#6a6a6a;letter-spacing:0.3px;">当日到达</div>
<div class="a sf " style="left:508.5px;top:791.00px;line-height:24px;font-size:17.4px;color:#8c8f96;letter-spacing:0.3px;width:90px;text-align:center;">--</div>
<div class="a sf " style="left:605.7px;top:791.60px;line-height:24px;color:#f3942f;width:90px;text-align:center;">候补</div>
<div class="a sf " style="left:701.7px;top:791.60px;line-height:24px;color:#f3942f;width:90px;text-align:center;">候补</div>
<div class="a sf " style="left:796.5px;top:791.00px;line-height:24px;font-size:17.4px;color:#8c8f96;letter-spacing:0.3px;width:90px;text-align:center;">--</div>
<div class="a sf " style="left:892.5px;top:791.00px;line-height:24px;font-size:17.4px;color:#8c8f96;letter-spacing:0.3px;width:90px;text-align:center;">--</div>
<div class="a sf " style="left:988.5px;top:791.00px;line-height:24px;font-size:17.4px;color:#8c8f96;letter-spacing:0.3px;width:90px;text-align:center;">--</div>
<div class="a sf " style="left:1084.5px;top:791.00px;line-height:24px;font-size:17.4px;color:#8c8f96;letter-spacing:0.3px;width:90px;text-align:center;">--</div>
<div class="a sf " style="left:1180.5px;top:791.00px;line-height:24px;font-size:17.4px;color:#8c8f96;letter-spacing:0.3px;width:90px;text-align:center;">--</div>
<div class="a" style="left:0;top:833px;width:1282px;height:59px;background:#fff;border-bottom:1px solid #c2d4e3"></div>
<div class="a" style="left:505px;top:833px;width:1px;height:59px;background:#c2d4e3"></div>
<div class="a" style="left:601px;top:833px;width:1px;height:59px;background:#c2d4e3"></div>
<div class="a" style="left:697px;top:833px;width:1px;height:59px;background:#c2d4e3"></div>
<div class="a" style="left:793px;top:833px;width:1px;height:59px;background:#c2d4e3"></div>
<div class="a" style="left:889px;top:833px;width:1px;height:59px;background:#c2d4e3"></div>
<div class="a" style="left:985px;top:833px;width:1px;height:59px;background:#c2d4e3"></div>
<div class="a" style="left:1081px;top:833px;width:1px;height:59px;background:#c2d4e3"></div>
<div class="a" style="left:1177px;top:833px;width:1px;height:59px;background:#c2d4e3"></div>
<div class="a" style="left:1273px;top:833px;width:1px;height:59px;background:#c2d4e3"></div>
<div class="a nm" style="left:-121px;width:200px;text-align:right;top:849.3px;line-height:30px;font-size:21.6px;color:#2b2b2b;text-decoration:underline;text-decoration-thickness:2px;text-underline-offset:2px">D3126</div>
<svg class="a" style="left:97px;top:848.0px" width="16" height="9" viewBox="0 0 16 9"><path d="M0.5 0.3 H15 L7.75 7.8 Z" fill="#1268e0"/></svg>
<div class="bd ss" style="left:136.9px;top:842.3px;background:#d3a254">始</div>
<div class="bd ss" style="left:136.9px;top:868.8px;background:#6e9bdd">过</div>
<div class="a sf " style="left:163.6px;top:838.50px;line-height:24px;color:#404040;font-weight:bold;letter-spacing:1.5px;-webkit-text-stroke:0.3px;-webkit-text-stroke:0.12px;">深圳北</div>
<div class="a sf " style="left:163.6px;top:864.50px;line-height:24px;color:#404040;font-weight:bold;letter-spacing:1.5px;-webkit-text-stroke:0.3px;-webkit-text-stroke:0.12px;">汕尾</div>
<div class="a nm " style="left:282px;top:838.50px;line-height:24px;font-size:18.7px;color:#262626;">07:06</div>
<div class="a nm " style="left:282px;top:864.80px;line-height:24px;font-size:18.7px;color:#999;">08:03</div>
<div class="a nm " style="left:393px;top:838.80px;line-height:24px;font-size:15.84px;color:#262626;">00:57</div>
<div class="a ss " style="left:393.5px;top:865.00px;line-height:24px;font-size:17px;color:#6a6a6a;letter-spacing:0.3px;">当日到达</div>
<div class="a sf " style="left:508.5px;top:850.00px;line-height:24px;font-size:17.4px;color:#8c8f96;letter-spacing:0.3px;width:90px;text-align:center;">--</div>
<div class="a sf " style="left:605.7px;top:850.60px;line-height:24px;color:#f3942f;width:90px;text-align:center;">候补</div>
<div class="a sf " style="left:701.7px;top:850.60px;line-height:24px;color:#f3942f;width:90px;text-align:center;">候补</div>
<div class="a sf " style="left:796.5px;top:850.00px;line-height:24px;font-size:17.4px;color:#8c8f96;letter-spacing:0.3px;width:90px;text-align:center;">--</div>
<div class="a sf " style="left:892.5px;top:850.00px;line-height:24px;font-size:17.4px;color:#8c8f96;letter-spacing:0.3px;width:90px;text-align:center;">--</div>
<div class="a sf " style="left:988.5px;top:850.00px;line-height:24px;font-size:17.4px;color:#8c8f96;letter-spacing:0.3px;width:90px;text-align:center;">--</div>
<div class="a sf " style="left:1084.5px;top:850.00px;line-height:24px;font-size:17.4px;color:#8c8f96;letter-spacing:0.3px;width:90px;text-align:center;">--</div>
<div class="a sf " style="left:1180.5px;top:850.00px;line-height:24px;font-size:17.4px;color:#8c8f96;letter-spacing:0.3px;width:90px;text-align:center;">--</div>
<div class="a" style="left:0;top:892px;width:1282px;height:59px;background:#eef1f8;border-bottom:1px solid #c2d4e3"></div>
<div class="a" style="left:505px;top:892px;width:1px;height:59px;background:#c2d4e3"></div>
<div class="a" style="left:601px;top:892px;width:1px;height:59px;background:#c2d4e3"></div>
<div class="a" style="left:697px;top:892px;width:1px;height:59px;background:#c2d4e3"></div>
<div class="a" style="left:793px;top:892px;width:1px;height:59px;background:#c2d4e3"></div>
<div class="a" style="left:889px;top:892px;width:1px;height:59px;background:#c2d4e3"></div>
<div class="a" style="left:985px;top:892px;width:1px;height:59px;background:#c2d4e3"></div>
<div class="a" style="left:1081px;top:892px;width:1px;height:59px;background:#c2d4e3"></div>
<div class="a" style="left:1177px;top:892px;width:1px;height:59px;background:#c2d4e3"></div>
<div class="a" style="left:1273px;top:892px;width:1px;height:59px;background:#c2d4e3"></div>
<div class="a nm" style="left:-121px;width:200px;text-align:right;top:908.3px;line-height:30px;font-size:21.6px;color:#2b2b2b;text-decoration:underline;text-decoration-thickness:2px;text-underline-offset:2px">D2352</div>
<svg class="a" style="left:97px;top:907.0px" width="16" height="9" viewBox="0 0 16 9"><path d="M0.5 0.3 H15 L7.75 7.8 Z" fill="#1268e0"/></svg>
<div class="bd ss" style="left:136.9px;top:901.3px;background:#d3a254">始</div>
<div class="bd ss" style="left:136.9px;top:927.8px;background:#6e9bdd">过</div>
<div class="a sf " style="left:163.6px;top:897.50px;line-height:24px;color:#404040;font-weight:bold;letter-spacing:1.5px;-webkit-text-stroke:0.3px;-webkit-text-stroke:0.12px;">深圳北</div>
<div class="a sf " style="left:163.6px;top:923.50px;line-height:24px;color:#404040;font-weight:bold;letter-spacing:1.5px;-webkit-text-stroke:0.3px;-webkit-text-stroke:0.12px;">陆丰</div>
<div class="a nm " style="left:282px;top:897.50px;line-height:24px;font-size:18.7px;color:#262626;">07:11</div>
<div class="a nm " style="left:282px;top:923.80px;line-height:24px;font-size:18.7px;color:#999;">08:07</div>
<div class="a nm " style="left:393px;top:897.80px;line-height:24px;font-size:15.84px;color:#262626;">00:56</div>
<div class="a ss " style="left:393.5px;top:924.00px;line-height:24px;font-size:17px;color:#6a6a6a;letter-spacing:0.3px;">当日到达</div>
<div class="a sf " style="left:508.5px;top:909.00px;line-height:24px;font-size:17.4px;color:#8c8f96;letter-spacing:0.3px;width:90px;text-align:center;">--</div>
<div class="a sf " style="left:605.7px;top:909.60px;line-height:24px;color:#f3942f;width:90px;text-align:center;">候补</div>
<div class="a sf " style="left:701.7px;top:909.60px;line-height:24px;color:#f3942f;width:90px;text-align:center;">候补</div>
<div class="a sf " style="left:796.5px;top:909.00px;line-height:24px;font-size:17.4px;color:#8c8f96;letter-spacing:0.3px;width:90px;text-align:center;">--</div>
<div class="a sf " style="left:892.5px;top:909.00px;line-height:24px;font-size:17.4px;color:#8c8f96;letter-spacing:0.3px;width:90px;text-align:center;">--</div>
<div class="a sf " style="left:988.5px;top:909.00px;line-height:24px;font-size:17.4px;color:#8c8f96;letter-spacing:0.3px;width:90px;text-align:center;">--</div>
<div class="a sf " style="left:1084.5px;top:909.00px;line-height:24px;font-size:17.4px;color:#8c8f96;letter-spacing:0.3px;width:90px;text-align:center;">--</div>
<div class="a sf " style="left:1180.5px;top:909.00px;line-height:24px;font-size:17.4px;color:#8c8f96;letter-spacing:0.3px;width:90px;text-align:center;">--</div>
<div class="a" style="left:0;top:951px;width:1282px;height:59px;background:#fff;border-bottom:1px solid #c2d4e3"></div>
<div class="a" style="left:505px;top:951px;width:1px;height:59px;background:#c2d4e3"></div>
<div class="a" style="left:601px;top:951px;width:1px;height:59px;background:#c2d4e3"></div>
<div class="a" style="left:697px;top:951px;width:1px;height:59px;background:#c2d4e3"></div>
<div class="a" style="left:793px;top:951px;width:1px;height:59px;background:#c2d4e3"></div>
<div class="a" style="left:889px;top:951px;width:1px;height:59px;background:#c2d4e3"></div>
<div class="a" style="left:985px;top:951px;width:1px;height:59px;background:#c2d4e3"></div>
<div class="a" style="left:1081px;top:951px;width:1px;height:59px;background:#c2d4e3"></div>
<div class="a" style="left:1177px;top:951px;width:1px;height:59px;background:#c2d4e3"></div>
<div class="a" style="left:1273px;top:951px;width:1px;height:59px;background:#c2d4e3"></div>
<div class="a nm" style="left:-121px;width:200px;text-align:right;top:967.3px;line-height:30px;font-size:21.6px;color:#2b2b2b;text-decoration:underline;text-decoration-thickness:2px;text-underline-offset:2px">D674</div>
<svg class="a" style="left:97px;top:966.0px" width="16" height="9" viewBox="0 0 16 9"><path d="M0.5 0.3 H15 L7.75 7.8 Z" fill="#1268e0"/></svg>
<div class="bd ss" style="left:136.9px;top:960.3px;background:#d3a254">始</div>
<div class="bd ss" style="left:136.9px;top:986.8px;background:#6e9bdd">过</div>
<div class="a sf " style="left:163.6px;top:956.50px;line-height:24px;color:#404040;font-weight:bold;letter-spacing:1.5px;-webkit-text-stroke:0.3px;-webkit-text-stroke:0.12px;">深圳北</div>
<div class="a sf " style="left:163.6px;top:982.50px;line-height:24px;color:#404040;font-weight:bold;letter-spacing:1.5px;-webkit-text-stroke:0.3px;-webkit-text-stroke:0.12px;">鲘门</div>
<div class="a nm " style="left:282px;top:956.50px;line-height:24px;font-size:18.7px;color:#262626;">07:16</div>
<div class="a nm " style="left:282px;top:982.80px;line-height:24px;font-size:18.7px;color:#999;">08:02</div>
<div class="a nm " style="left:393px;top:956.80px;line-height:24px;font-size:15.84px;color:#262626;">00:46</div>
<div class="a ss " style="left:393.5px;top:983.00px;line-height:24px;font-size:17px;color:#6a6a6a;letter-spacing:0.3px;">当日到达</div>
<div class="a sf " style="left:508.5px;top:968.00px;line-height:24px;font-size:17.4px;color:#8c8f96;letter-spacing:0.3px;width:90px;text-align:center;">--</div>
<div class="a sf " style="left:605.7px;top:968.60px;line-height:24px;color:#f3942f;width:90px;text-align:center;">候补</div>
<div class="a sf " style="left:701.7px;top:968.60px;line-height:24px;color:#f3942f;width:90px;text-align:center;">候补</div>
<div class="a sf " style="left:796.5px;top:968.00px;line-height:24px;font-size:17.4px;color:#8c8f96;letter-spacing:0.3px;width:90px;text-align:center;">--</div>
<div class="a sf " style="left:892.5px;top:968.00px;line-height:24px;font-size:17.4px;color:#8c8f96;letter-spacing:0.3px;width:90px;text-align:center;">--</div>
<div class="a sf " style="left:988.5px;top:968.00px;line-height:24px;font-size:17.4px;color:#8c8f96;letter-spacing:0.3px;width:90px;text-align:center;">--</div>
<div class="a sf " style="left:1084.5px;top:968.00px;line-height:24px;font-size:17.4px;color:#8c8f96;letter-spacing:0.3px;width:90px;text-align:center;">--</div>
<div class="a sf " style="left:1180.5px;top:968.00px;line-height:24px;font-size:17.4px;color:#8c8f96;letter-spacing:0.3px;width:90px;text-align:center;">--</div>
<div class="a" style="left:0;top:1010px;width:1282px;height:59px;background:#eef1f8;border-bottom:1px solid #c2d4e3"></div>
<div class="a" style="left:505px;top:1010px;width:1px;height:59px;background:#c2d4e3"></div>
<div class="a" style="left:601px;top:1010px;width:1px;height:59px;background:#c2d4e3"></div>
<div class="a" style="left:697px;top:1010px;width:1px;height:59px;background:#c2d4e3"></div>
<div class="a" style="left:793px;top:1010px;width:1px;height:59px;background:#c2d4e3"></div>
<div class="a" style="left:889px;top:1010px;width:1px;height:59px;background:#c2d4e3"></div>
<div class="a" style="left:985px;top:1010px;width:1px;height:59px;background:#c2d4e3"></div>
<div class="a" style="left:1081px;top:1010px;width:1px;height:59px;background:#c2d4e3"></div>
<div class="a" style="left:1177px;top:1010px;width:1px;height:59px;background:#c2d4e3"></div>
<div class="a" style="left:1273px;top:1010px;width:1px;height:59px;background:#c2d4e3"></div>
<div class="a nm" style="left:-121px;width:200px;text-align:right;top:1026.3px;line-height:30px;font-size:21.6px;color:#2b2b2b;text-decoration:underline;text-decoration-thickness:2px;text-underline-offset:2px">D674</div>
<svg class="a" style="left:97px;top:1025.0px" width="16" height="9" viewBox="0 0 16 9"><path d="M0.5 0.3 H15 L7.75 7.8 Z" fill="#1268e0"/></svg>
<div class="bd ss" style="left:136.9px;top:1019.3px;background:#d3a254">始</div>
<div class="bd ss" style="left:136.9px;top:1045.8px;background:#6e9bdd">过</div>
<div class="a sf " style="left:163.6px;top:1015.50px;line-height:24px;color:#404040;font-weight:bold;letter-spacing:1.5px;-webkit-text-stroke:0.3px;-webkit-text-stroke:0.12px;">深圳北</div>
<div class="a sf " style="left:163.6px;top:1041.50px;line-height:24px;color:#404040;font-weight:bold;letter-spacing:1.5px;-webkit-text-stroke:0.3px;-webkit-text-stroke:0.12px;">汕尾</div>
<div class="a nm " style="left:282px;top:1015.50px;line-height:24px;font-size:18.7px;color:#262626;">07:16</div>
<div class="a nm " style="left:282px;top:1041.80px;line-height:24px;font-size:18.7px;color:#999;">08:17</div>
<div class="a nm " style="left:393px;top:1015.80px;line-height:24px;font-size:15.84px;color:#262626;">01:01</div>
<div class="a ss " style="left:393.5px;top:1042.00px;line-height:24px;font-size:17px;color:#6a6a6a;letter-spacing:0.3px;">当日到达</div>
<div class="a sf " style="left:508.5px;top:1027.00px;line-height:24px;font-size:17.4px;color:#8c8f96;letter-spacing:0.3px;width:90px;text-align:center;">--</div>
<div class="a sf " style="left:605.7px;top:1027.60px;line-height:24px;color:#f3942f;width:90px;text-align:center;">候补</div>
<div class="a sf " style="left:701.7px;top:1027.60px;line-height:24px;color:#f3942f;width:90px;text-align:center;">候补</div>
<div class="a sf " style="left:796.5px;top:1027.00px;line-height:24px;font-size:17.4px;color:#8c8f96;letter-spacing:0.3px;width:90px;text-align:center;">--</div>
<div class="a sf " style="left:892.5px;top:1027.00px;line-height:24px;font-size:17.4px;color:#8c8f96;letter-spacing:0.3px;width:90px;text-align:center;">--</div>
<div class="a sf " style="left:988.5px;top:1027.00px;line-height:24px;font-size:17.4px;color:#8c8f96;letter-spacing:0.3px;width:90px;text-align:center;">--</div>
<div class="a sf " style="left:1084.5px;top:1027.00px;line-height:24px;font-size:17.4px;color:#8c8f96;letter-spacing:0.3px;width:90px;text-align:center;">--</div>
<div class="a sf " style="left:1180.5px;top:1027.00px;line-height:24px;font-size:17.4px;color:#8c8f96;letter-spacing:0.3px;width:90px;text-align:center;">--</div>
</body></html>
